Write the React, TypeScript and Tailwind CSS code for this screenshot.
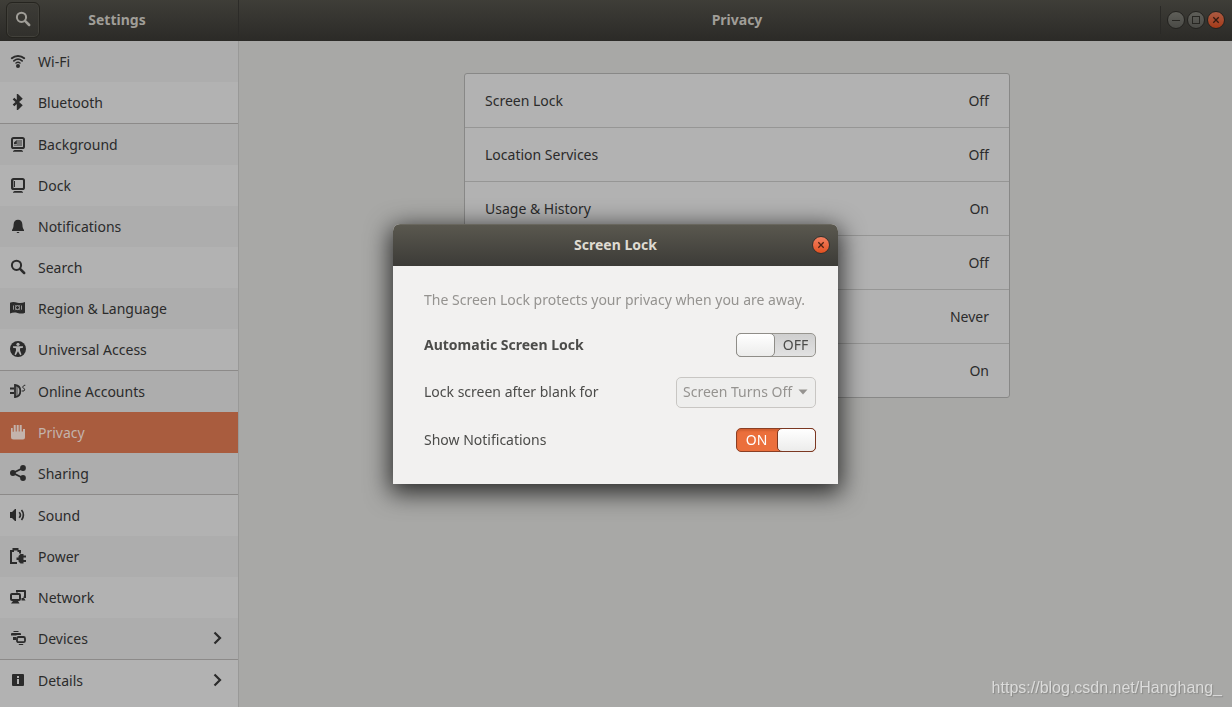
import { useState } from 'react'
import type { ReactNode } from 'react'

interface NavItem {
  label: string
  icon: ReactNode
  more?: boolean
}

const display = (
  <>
    <rect x="2" y="2" width="12" height="10" rx="1.6" fill="none" stroke="currentColor" strokeWidth="2" />
    <path d="M4.5 14h7l1.5 1v.8H3V15z" />
  </>
)

const icons = {
  wifi: (
    <>
      <g fill="none" stroke="currentColor" strokeLinecap="round">
        <path d="M1.8 5.2C5.3 2.1 10.7 2.1 14.2 5.2" strokeWidth="2" />
        <path d="M3.9 7.9C6.3 5.9 9.7 5.9 12.1 7.9" strokeWidth="1.8" />
        <path d="M6 10C7.2 9.2 8.8 9.2 10 10" strokeWidth="1.5" />
      </g>
      <circle cx="8" cy="13" r="2" />
    </>
  ),
  bluetooth: <path d="M3.5 4.7L11 11.3L8 14.3V1.7L11 4.7L3.5 11.3" fill="none" stroke="currentColor" strokeWidth="2.4" />,
  background: (
    <>
      {display}
      <path d="M7 4h5v6H4V8.5h3z" opacity="0.45" />
      <path d="M4 8V6.500L6.800 4V8z" />
    </>
  ),
  dock: (
    <>
      {display}
      <path d="M4 4h1v6H4z" />
      <path d="M3 3h1v8H3z" opacity="0.4" />
    </>
  ),
  bell: <path d="M8 1.7C5.2 1.7 3.8 3.6 3.600 6.5C3.500 9 3.200 10.400 2 12V13H14V12C12.800 10.400 12.500 9 12.400 6.500C12.200 3.600 10.800 1.700 8 1.700zM6.500 14h3l-.8 1H7.300z" />,
  search: (
    <>
      <circle cx="6.5" cy="6.3" r="4.600" fill="none" stroke="currentColor" strokeWidth="2" />
      <path d="M10 9.800L14.200 14" stroke="currentColor" strokeWidth="2.500" strokeLinecap="round" />
    </>
  ),
  region: (
    <>
      <path d="M0 2.700C2.500 1.600 5 2 7.500 2.700C10 3.400 12.500 3.200 15 2V12.700C12.500 14 10 13.600 7.500 12.900C5 12.200 2.500 12.200 0 13.500z" />
      <g fill="none" stroke="#adadad" strokeWidth="1">
        <circle cx="7.500" cy="7.600" r="2" />
        <path d="M4.900 5L5.800 5.900M10.100 5L9.200 5.900M4.900 10.200L5.800 9.300M10.100 10.200L9.200 9.300" strokeWidth="0.800" />
        <path d="M3.500 5.500v4.200M11.500 5.500v4.200" strokeWidth="0.800" />
      </g>
    </>
  ),
  access: (
    <>
      <circle cx="8" cy="8" r="8" />
      <g fill="#b2b2b2">
        <circle cx="8" cy="3.300" r="1.600" />
        <path d="M3 5.200H13V6.700L10 7.200V9.500L11.500 13.600L10.200 14.200L8 10.300L5.800 14.200L4.500 13.600L6 9.500V7.200L3 6.700z" />
      </g>
    </>
  ),
  accounts: (
    <>
      <path d="M0 4.500h4v2H0zM0 9h4v2H0z" />
      <path d="M5 2V14C8.500 13.700 10.300 11 10.300 8C10.300 5 8.500 2.300 5 2z" fill="none" stroke="currentColor" strokeWidth="1.800" />
      <path d="M7 3v10" stroke="currentColor" strokeWidth="2" opacity="0.4" />
      <path d="M15.300 2.300H14L12.500 4.300L14.800 6.200L14 8H11.800" fill="none" stroke="currentColor" strokeWidth="1" />
    </>
  ),
  hand: <path d="M1 4h1.700v3.700h1V1h2v6.500h1V1h2v6.500h1V1h2v6.500h1.300V5H15V13.500Q15 15.500 13 15.500H3.500Q1 15.500 1 13z" />,
  sharing: (
    <>
      <path d="M13 3L3 8L13 13" fill="none" stroke="currentColor" strokeWidth="1.900" />
      <circle cx="2.900" cy="8" r="2.900" />
      <circle cx="13" cy="3" r="2.900" />
      <circle cx="13" cy="13" r="2.900" />
    </>
  ),
  sound: (
    <>
      <path d="M0 5H2L5 2H6V14H5L2 11H0z" />
      <path d="M9.200 5.200C10.600 6.800 10.600 9.200 9.200 10.800M11.500 3C14 5.800 14 10.200 11.500 13" fill="none" stroke="currentColor" strokeWidth="1.700" />
    </>
  ),
  power: (
    <>
      <path d="M0 2H2.500V0H8.500V2H11V5.500H9V4H7.500V2.500H4V4H2V14H7V16H0z" />
      <path d="M13.500 6V15.500H10.500L8.500 13.500V12H6.500V9.500H8.500V8L10.500 6zM13 7.500h3v2h-3zM13 12h3v2h-3z" />
    </>
  ),
  network: (
    <>
      <path d="M6 1H15Q16 1 16 2V9H13.500V7.500H14V3H8V3.500H6zM11.500 9H14L15.500 11.500H11.500z" />
      <rect x="1" y="5" width="9" height="6" rx="1" fill="none" stroke="currentColor" strokeWidth="2" />
      <path d="M3 12H8L9.500 14.500H1z" />
    </>
  ),
  devices: (
    <>
      <path d="M3.500 1h5v1h-5zM2 3h8q1 0 1 1v1H6.500V5.500H1V4q0-1 1-1zM3 7h3v3H3z" />
      <rect x="7" y="7" width="8" height="5.200" rx="1.500" fill="none" stroke="currentColor" strokeWidth="1.800" />
      <path d="M8.500 14h5l-.7 1H9.200z" />
    </>
  ),
  details: (
    <>
      <rect x="2" y="2" width="12" height="12" rx="1" />
      <path d="M7 4h2v2H7zM7 7h2v5H7z" fill="#b2b2b2" />
    </>
  ),
}

const groups: NavItem[][] = [
  [
    { label: 'Wi-Fi', icon: icons.wifi },
    { label: 'Bluetooth', icon: icons.bluetooth },
  ],
  [
    { label: 'Background', icon: icons.background },
    { label: 'Dock', icon: icons.dock },
    { label: 'Notifications', icon: icons.bell },
    { label: 'Search', icon: icons.search },
    { label: 'Region & Language', icon: icons.region },
    { label: 'Universal Access', icon: icons.access },
  ],
  [
    { label: 'Online Accounts', icon: icons.accounts },
    { label: 'Privacy', icon: icons.hand },
    { label: 'Sharing', icon: icons.sharing },
  ],
  [
    { label: 'Sound', icon: icons.sound },
    { label: 'Power', icon: icons.power },
    { label: 'Network', icon: icons.network },
    { label: 'Devices', icon: icons.devices, more: true },
  ],
  [{ label: 'Details', icon: icons.details, more: true }],
]

const order = groups.flat().map((item) => item.label)

const privacyRows = [
  { label: 'Screen Lock', value: 'Off' },
  { label: 'Location Services', value: 'Off' },
  { label: 'Usage & History', value: 'On' },
  { label: 'Purge Trash & Temporary Files', value: 'Off' },
  { label: 'Problem Reporting', value: 'Never' },
  { label: 'Connectivity Checking', value: 'On' },
]

function Icon({ children }: { children: ReactNode }) {
  return (
    <svg width="16" height="16" viewBox="0 0 16 16" fill="currentColor" aria-hidden="true" className="mb-px shrink-0">
      {children}
    </svg>
  )
}

function Sidebar() {
  const [active, setActive] = useState('Privacy')

  function rowColor(label: string) {
    if (label === active) return 'bg-[#a95c3e] text-[#c3b3ac]'
    return order.indexOf(label) % 2 === 0 ? 'bg-[#adadad]' : 'bg-[#b2b2b2]'
  }

  return (
    <nav className="w-[239px] shrink-0 border-r border-[#999998] bg-[#b2b2b2] text-[#2b2b2b]">
      {groups.map((items, i) => (
        <ul key={i} className={i > 0 ? 'border-t border-[#8c8a89]' : ''}>
          {items.map(({ label, icon, more }) => (
            <li key={label}>
              <a
                href="#"
                onClick={() => setActive(label)}
                aria-current={label === active ? 'page' : undefined}
                className={`flex h-[41px] items-center gap-3 pl-2.5 pr-3 ${rowColor(label)}`}
              >
                <Icon>{icon}</Icon>
                <span className="flex-1">{label}</span>
                {more && (
                  <Icon>
                    <path d="M4.500 2.500L10 8L4.500 13.500" fill="none" stroke="currentColor" strokeWidth="2.200" />
                  </Icon>
                )}
              </a>
            </li>
          ))}
        </ul>
      ))}
    </nav>
  )
}

const windowButton = 'flex size-[18px] items-center justify-center rounded-full border'

function CloseGlyph() {
  return (
    <svg width="8" height="8" viewBox="0 0 8 8" aria-hidden="true">
      <path d="M1.300 1.300L6.700 6.700M6.700 1.300L1.300 6.700" stroke="currentColor" strokeWidth="1.300" />
    </svg>
  )
}

function TitleBar() {
  return (
    <header className="flex h-[41px] bg-linear-to-b from-[#3f3e38] to-[#2b2a27] font-bold text-[#a09e98]">
      <div className="grid w-[239px] shrink-0 grid-cols-[1fr_auto_1fr] items-center border-r border-[#2c2b28] pr-2.5 pb-0.5 pl-1.5">
        <button
          aria-label="Search"
          className="flex h-9 w-[34px] items-center justify-center rounded-md border border-[#25241f] bg-linear-to-b from-[#3d3c37] to-[#31302c] shadow-[inset_0_0_0_1px_#42413b]"
        >
          <Icon>{icons.search}</Icon>
        </button>
        <h1>Settings</h1>
      </div>
      <div className="ml-[3px] grid flex-1 grid-cols-[1fr_auto_1fr] items-center pb-0.5">
        <h2 className="col-start-2">Privacy</h2>
        <div className="flex h-7 items-center justify-end gap-0.5 pr-[7px]">
          <span className="mr-1 h-full border-l border-[#2a2926]" />
          <button aria-label="Minimize" className={`${windowButton} border-[#23221f] bg-linear-to-b from-[#5f5f59] to-[#4a4a46] text-[#272622]`}>
            <svg width="8" height="8" viewBox="0 0 8 8" aria-hidden="true">
              <path d="M0 4h8v1H0z" fill="currentColor" />
            </svg>
          </button>
          <button aria-label="Maximize" className={`${windowButton} border-[#23221f] bg-linear-to-b from-[#5f5f59] to-[#4a4a46] text-[#272622]`}>
            <svg width="8" height="8" viewBox="0 0 8 8" aria-hidden="true">
              <rect x="0.500" y="0.500" width="7" height="7" fill="none" stroke="currentColor" />
            </svg>
          </button>
          <button aria-label="Close" className={`${windowButton} border-[#23221f] bg-linear-to-b from-[#ab5a41] to-[#a53a17] text-[#331a10]`}>
            <CloseGlyph />
          </button>
        </div>
      </div>
    </header>
  )
}

function Switch({ id, checked, onChange }: { id: string; checked: boolean; onChange: (v: boolean) => void }) {
  return (
    <span className="relative flex h-6 w-20">
      <input
        id={id}
        type="checkbox"
        role="switch"
        checked={checked}
        onChange={(e) => onChange(e.target.checked)}
        className={`absolute inset-0 size-full appearance-none rounded-[5px] border ${
          checked
            ? 'border-[#8b3f24] bg-[#eb6f3c] shadow-[inset_0_2px_2px_#d35f30]'
            : 'border-[#97958f] bg-linear-to-b from-[#cfcfcf] to-[#e2e2e2]'
        }`}
      />
      <span className={`pointer-events-none relative flex w-full items-center ${checked ? 'flex-row-reverse text-white' : ''}`}>
        <span
          className={`h-full w-[39px] rounded-[5px] border bg-linear-to-b from-white to-[#ececeb] ${
            checked ? 'border-[#7b3822]' : 'border-[#8f8d88]'
          }`}
        />
        <span className="flex-1 text-center">{checked ? 'ON' : 'OFF'}</span>
      </span>
    </span>
  )
}

function ScreenLockDialog() {
  const [autoLock, setAutoLock] = useState(false)
  const [notifications, setNotifications] = useState(true)

  return (
    <div
      role="dialog"
      aria-labelledby="lock-title"
      className="w-[445px] max-w-full overflow-hidden rounded-t-[7px] bg-[#f2f1f0] text-[#4c4c4a] shadow-[0_6px_24px_3px_rgba(0,0,0,0.75)]"
    >
      <div className="grid h-[42px] grid-cols-[1fr_auto_1fr] items-center border-t border-[#69675e] bg-linear-to-b from-[#5a584f] to-[#3c3b37] px-2 text-[#dfdbd2]">
        <h2 id="lock-title" className="col-start-2 font-bold">Screen Lock</h2>
        <button
          aria-label="Close dialog"
          className={`${windowButton} justify-self-end border-[#33322e] bg-linear-to-b from-[#f38060] to-[#e2501d] text-[#4e2213]`}
        >
          <CloseGlyph />
        </button>
      </div>

      <div className="flex flex-col gap-5 pt-6 pr-[22px] pb-8 pl-[31px]">
        <p className="mb-[3px] text-[#959390]">The Screen Lock protects your privacy when you are away.</p>
        <div className="flex items-center justify-between">
          <label htmlFor="auto-lock" className="font-bold">Automatic Screen Lock</label>
          <Switch id="auto-lock" checked={autoLock} onChange={setAutoLock} />
        </div>
        <div className="flex items-center justify-between">
          <label htmlFor="lock-after">Lock screen after blank for</label>
          <span className="relative flex items-center text-[#959390]">
            <select
              id="lock-after"
              disabled={!autoLock}
              className="h-[31px] w-[140px] appearance-none rounded-[5px] border border-[#c8c6c3] bg-[#eeeeed] pl-1.5 opacity-100"
            >
              <option>Screen Turns Off</option>
            </select>
            <svg width="10" height="6" viewBox="0 0 10 6" aria-hidden="true" className="pointer-events-none absolute right-2">
              <path d="M0.500 0.500H9.500L5 5.500z" fill="currentColor" />
            </svg>
          </span>
        </div>
        <div className="flex items-center justify-between">
          <label htmlFor="show-notifications">Show Notifications</label>
          <Switch id="show-notifications" checked={notifications} onChange={setNotifications} />
        </div>
      </div>
    </div>
  )
}

export default function App() {
  return (
    <div className="flex min-h-screen flex-col bg-[#a8a8a6] font-['Noto_Sans',sans-serif] text-[14px] leading-5 text-[#2b2b2b]">
      <TitleBar />
      <div className="flex flex-1">
        <Sidebar />
        <main className="ml-[3px] flex-1 pt-8">
          <ul className="mx-auto w-[546px] max-w-full divide-y divide-[#969695] rounded-[3px] border border-[#888887] bg-[#b2b2b2]">
            {privacyRows.map(({ label, value }) => (
              <li key={label}>
                <button className="flex h-[53px] w-full items-center justify-between px-5">
                  <span>{label}</span>
                  <span>{value}</span>
                </button>
              </li>
            ))}
          </ul>
        </main>
      </div>

      <div className="fixed inset-0 flex items-center justify-center pr-px">
        <ScreenLockDialog />
      </div>

      <a
        href="https://blog.csdn.net/Hanghang_"
        className="fixed right-2.5 bottom-[7px] font-['Liberation_Sans',sans-serif] text-[16px] leading-6 text-[#dcdcdb] [text-shadow:1px_1px_1px_#8a8a88]"
      >
        https://blog.csdn.net/Hanghang_
      </a>
    </div>
  )
}
